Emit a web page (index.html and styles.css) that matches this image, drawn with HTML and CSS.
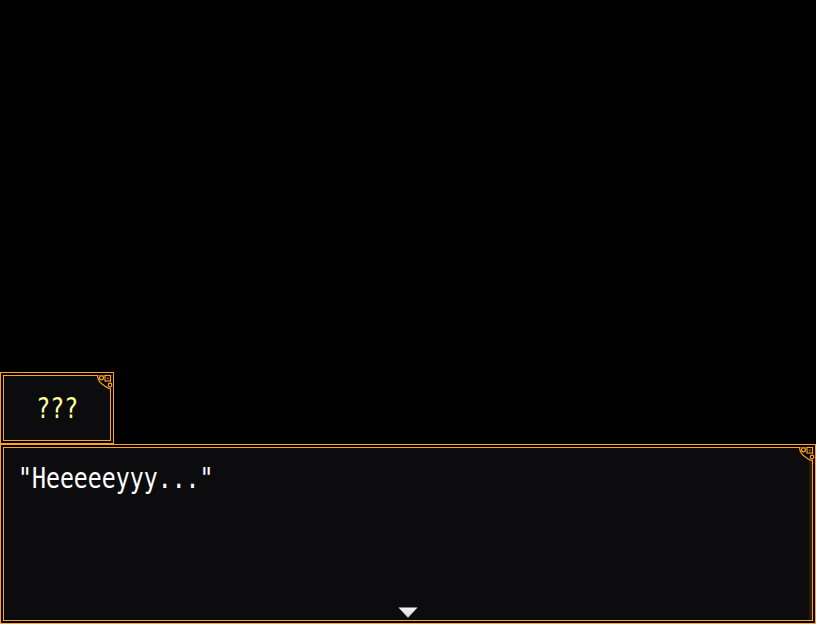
FILE: index.html
```html
<!DOCTYPE html>
<html>
<head>
<meta charset="utf-8">
<link rel="stylesheet" href="styles.css">
</head>
<body>
<div class="screen">
  <div class="window name-window">
    <div class="inner name-inner">
      <span class="rpg-text name-text">???</span>
    </div>
    <svg class="ornament" viewBox="0 0 20 20" width="20" height="20">
      <path d="M3.5 3.5 C3.8 8.5 6.5 11.5 10.5 13.8 C12.5 15 13.5 16.5 16.5 16.5 V3.5 Z" fill="#000"/>
      <path d="M0 3.5 H3.5 C3.8 8.5 6.5 11.5 10.5 13.8 C12.5 15 13.5 16.5 16.5 16.5 V20" fill="none" stroke="#ffa51c" stroke-width="1.2"/>
      <circle cx="7.5" cy="5.8" r="2" fill="none" stroke="#ffa51c" stroke-width="1.2"/>
      <rect x="11" y="3.5" width="5.5" height="5.5" fill="none" stroke="#ffa51c" stroke-width="1.2"/>
      <rect x="13.2" y="5.7" width="1.4" height="1.4" fill="#ffa51c"/>
      <circle cx="16" cy="13" r="1.8" fill="#000" stroke="#ffa51c" stroke-width="1.2"/>
    </svg>
  </div>
  <div class="window message-window">
    <div class="inner message-inner">
      <p class="rpg-text message-text">"Heeeeeyyy..."</p>
    </div>
    <svg class="ornament" viewBox="0 0 20 20" width="20" height="20">
      <path d="M3.5 3.5 C3.8 8.5 6.5 11.5 10.5 13.8 C12.5 15 13.5 16.5 16.5 16.5 V3.5 Z" fill="#000"/>
      <path d="M0 3.5 H3.5 C3.8 8.5 6.5 11.5 10.5 13.8 C12.5 15 13.5 16.5 16.5 16.5 V20" fill="none" stroke="#ffa51c" stroke-width="1.2"/>
      <circle cx="7.5" cy="5.8" r="2" fill="none" stroke="#ffa51c" stroke-width="1.2"/>
      <rect x="11" y="3.5" width="5.5" height="5.5" fill="none" stroke="#ffa51c" stroke-width="1.2"/>
      <rect x="13.2" y="5.7" width="1.4" height="1.4" fill="#ffa51c"/>
      <circle cx="16" cy="13" r="1.8" fill="#000" stroke="#ffa51c" stroke-width="1.2"/>
    </svg>
    <svg class="pause-sign" viewBox="0 0 20 11" width="20" height="11">
      <defs>
        <linearGradient id="pg" x1="0" y1="0" x2="0" y2="1">
          <stop offset="0" stop-color="#f4f4f4"/>
          <stop offset="1" stop-color="#d8d8d8"/>
        </linearGradient>
      </defs>
      <polygon points="0.5,0.5 19.5,0.5 10,10.8" fill="url(#pg)"/>
    </svg>
  </div>
</div>
</body>
</html>
```
FILE: styles.css
```css
html, body {
  margin: 0;
  padding: 0;
  background: #000;
}

.screen {
  width: 816px;
  height: 624px;
  display: flex;
  flex-direction: column;
  justify-content: flex-end;
  align-items: flex-start;
  overflow: hidden;
}

.window {
  position: relative;
  box-sizing: border-box;
  border: 1px solid #ffa51c;
  padding: 2px;
  background: #000;
  display: flex;
}

.inner {
  flex: 1;
  box-sizing: border-box;
  border: 1px solid #ffa51c;
  background: #0c0c0f;
}

.name-window {
  width: 114px;
  height: 72px;
}

.name-inner {
  display: flex;
  align-items: center;
  justify-content: center;
}

.message-window {
  width: 816px;
  height: 180px;
}

.message-inner {
  padding: 12px 14px;
  background: linear-gradient(to right, #0c0c0f 0, #0c0c0f calc(100% - 4px), #3a2608 100%);
}

.rpg-text {
  font-family: "DejaVu Sans Mono", "Liberation Mono", monospace;
  font-size: 29px;
  line-height: 36px;
  display: inline-block;
  transform: scaleX(0.8);
}

.name-text {
  color: #ffffa0;
  transform-origin: center;
}

.message-text {
  margin: 0;
  color: #ffffff;
  transform-origin: left center;
  white-space: pre;
}

.ornament {
  position: absolute;
  top: -1px;
  right: -1px;
  display: block;
}

.pause-sign {
  position: absolute;
  left: 397px;
  bottom: 5px;
  display: block;
}
```
